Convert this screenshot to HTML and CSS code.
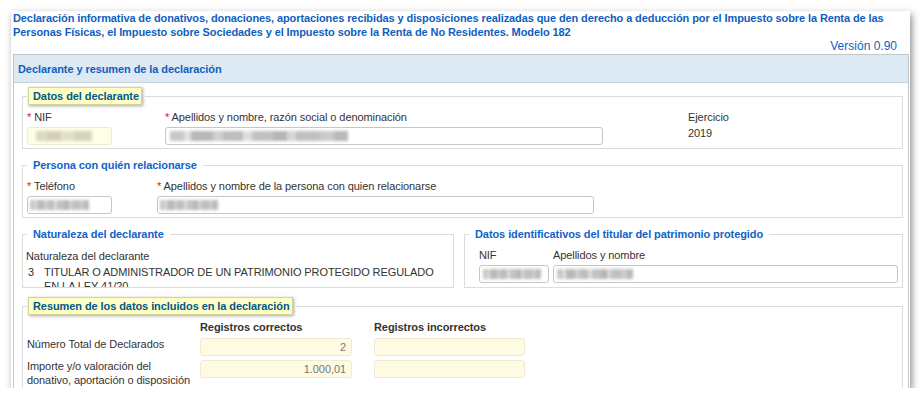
FILE: index.html
```html
<!DOCTYPE html>
<html lang="es">
<head>
<meta charset="utf-8">
<title>Modelo 182</title>
<link rel="stylesheet" href="styles.css">
</head>
<body>
<div class="window">
  <div class="title">Declaración informativa de donativos, donaciones, aportaciones recibidas y disposiciones realizadas que den derecho a deducción por el Impuesto sobre la Renta de las Personas Físicas, el Impuesto sobre Sociedades y el Impuesto sobre la Renta de No Residentes. Modelo 182</div>
  <div class="version">Versión 0.90</div>
  <div class="panel">
    <div class="panel-head">Declarante y resumen de la declaración</div>
    <div class="panel-body">

      <fieldset class="fs">
        <legend class="lg"><span class="hl">Datos del declarante</span></legend>
        <div class="row">
          <div class="col col-nif">
            <div class="lbl"><span class="req">*</span> NIF</div>
            <div class="inp inp-yellow"><span class="blur b1"></span></div>
          </div>
          <div class="col col-name1">
            <div class="lbl"><span class="req">*</span> Apellidos y nombre, razón social o denominación</div>
            <div class="inp"><span class="blur b2"></span></div>
          </div>
          <div class="col col-ej">
            <div class="lbl">Ejercicio</div>
            <div class="val">2019</div>
          </div>
        </div>
      </fieldset>

      <fieldset class="fs">
        <legend class="lg">Persona con quién relacionarse</legend>
        <div class="row">
          <div class="col col-nif">
            <div class="lbl"><span class="req">*</span> Teléfono</div>
            <div class="inp"><span class="blur b3"></span></div>
          </div>
          <div class="col col-name2">
            <div class="lbl"><span class="req">*</span> Apellidos y nombre de la persona con quien relacionarse</div>
            <div class="inp"><span class="blur b4"></span></div>
          </div>
        </div>
      </fieldset>

      <div class="pair">
        <fieldset class="fs fs-nat">
          <legend class="lg">Naturaleza del declarante</legend>
          <div class="nat">
            <div class="lbl">Naturaleza del declarante</div>
            <div class="nat-row">
              <span class="nat-num">3</span>
              <span class="nat-txt">TITULAR O ADMINISTRADOR DE UN PATRIMONIO PROTEGIDO REGULADO EN LA LEY 41/20</span>
            </div>
          </div>
        </fieldset>
        <fieldset class="fs fs-tit">
          <legend class="lg">Datos identificativos del titular del patrimonio protegido</legend>
          <div class="row">
            <div class="col col-nif3">
              <div class="lbl">NIF</div>
              <div class="inp"><span class="blur b5"></span></div>
            </div>
            <div class="col col-name3">
              <div class="lbl">Apellidos y nombre</div>
              <div class="inp"><span class="blur b6"></span></div>
            </div>
          </div>
        </fieldset>
      </div>

      <fieldset class="fs fs-res">
        <legend class="lg"><span class="hl">Resumen de los datos incluidos en la declaración</span></legend>
        <div class="grid">
          <div></div>
          <div class="th">Registros correctos</div>
          <div class="th">Registros incorrectos</div>
          <div class="glbl">Número Total de Declarados</div>
          <div class="inp inp-ro">2</div>
          <div class="inp inp-ro"></div>
          <div class="glbl">Importe y/o valoración del<br>donativo, aportación o disposición</div>
          <div class="inp inp-ro">1.000,01</div>
          <div class="inp inp-ro"></div>
        </div>
      </fieldset>

    </div>
  </div>
</div>
</body>
</html>
```

FILE: styles.css
```css
* { box-sizing: border-box; }

html, body {
  margin: 0;
  padding: 0;
  background: #ffffff;
}

body {
  font-family: "Liberation Sans", Arial, sans-serif;
  font-size: 11px;
  line-height: 14px;
  letter-spacing: -0.08px;
  color: #333333;
}

.window {
  margin: 11px 0 0 11px;
  width: 899px;
  height: 377px;
  background: #ffffff;
  overflow: hidden;
  padding: 0 1px 0 2px;
  box-shadow: 2px 3px 7px rgba(0, 0, 0, 0.45);
}

.title {
  color: #0f5fc0;
  font-weight: bold;
  line-height: 14px;
  letter-spacing: -0.1px;
  padding-right: 10px;
}

.version {
  color: #0f5fc0;
  text-align: right;
  padding-right: 12px;
  height: 15px;
  font-size: 12px;
  letter-spacing: 0;
}

.panel {
  border: 1px solid #c2c6ca;
  border-bottom: none;
}

.panel-head {
  background: #deeaf3;
  color: #0f5fc0;
  font-weight: bold;
  height: 28px;
  line-height: 28px;
  padding-left: 4px;
  border-bottom: 1px solid #c8d2da;
}

.panel-body {
  padding: 6px 5px 0 8px;
}

.fs {
  border: 1px solid #dcdcdc;
  margin: 0 0 9px 0;
  padding: 0 4px 3px 4px;
  min-width: 0;
}

.lg {
  color: #0f63c8;
  font-weight: bold;
  padding: 0 6px 0 6px;
  margin-left: 0;
  line-height: 14px;
}

.hl {
  position: relative;
  z-index: 0;
  color: #00588c;
}

.hl::before {
  content: "";
  position: absolute;
  left: -5px;
  right: -3px;
  top: -3px;
  bottom: -3px;
  background: #ffffc4;
  border: 1px solid #d4d3a0;
  box-shadow: 1px 1px 3px rgba(0, 0, 0, 0.35);
  z-index: -1;
}

.row {
  display: flex;
  align-items: flex-start;
  padding-top: 7px;
}

.col { display: flex; flex-direction: column; }

.lbl { height: 14px; white-space: nowrap; }

.req { color: #d2142a; }

.inp {
  height: 18px;
  margin-top: 3px;
  border: 1px solid #c6c6c6;
  border-radius: 3px;
  background: #ffffff;
  display: flex;
  align-items: center;
  overflow: hidden;
}

.inp-yellow {
  background: #fffde4;
  border-color: #ecebd6;
}

.col-nif { width: 85px; }
.col-name1 { width: 438px; margin-left: 53px; }
.col-ej { margin-left: 85px; }
.col-name2 { width: 437px; margin-left: 45px; }

.val { margin-top: 2px; line-height: 14px; }

.blur {
  display: inline-block;
  height: 10px;
  filter: blur(1.4px);
  background: linear-gradient(90deg, #c8c8c8 0 8%, #e2e2e2 8% 12%, #b8b8b8 12% 24%, #cfcfcf 24% 30%, #bdbdbd 30% 41%, #dedede 41% 46%, #c2c2c2 46% 58%, #b5b5b5 58% 66%, #d6d6d6 66% 71%, #c0c0c0 71% 84%, #cbcbcb 84% 92%, #b9b9b9 92% 100%);
}

.b1 { width: 56px; margin-left: 8px; background: linear-gradient(90deg, #dcdac4 0 20%, #d2d0ba 20% 45%, #e2e0ca 45% 70%, #d6d4be 70% 100%); }
.b2 { width: 178px; margin-left: 4px; }
.b3 { width: 59px; margin-left: 2px; }
.b4 { width: 58px; margin-left: 2px; }
.b5 { width: 58px; margin-left: 3px; }
.b6 { width: 76px; margin-left: 3px; }

.pair {
  display: flex;
  gap: 10px;
  margin-bottom: 11px;
}

.pair .fs { margin-bottom: 0; }

.fs-nat { width: 432px; flex: none; padding-bottom: 0; }
.fs-tit { flex: 1; padding-bottom: 3px; }

.nat {
  height: 46px;
  overflow: hidden;
  padding-top: 8px;
  margin-left: -1px;
}

.nat-row {
  display: flex;
  margin-top: 2px;
  line-height: 14px;
}

.nat-num { width: 18px; padding-left: 2px; flex: none; }
.nat-txt { flex: 1; padding-right: 4px; }

.col-nif3 { width: 70px; margin-left: 10px; }
.col-name3 { flex: 1; margin-left: 4px; }

.grid {
  display: grid;
  grid-template-columns: 151px 152px 151px;
  column-gap: 22px;
  row-gap: 4px;
  padding-top: 7px;
  align-items: start;
}

.th { font-weight: bold; }

.glbl { line-height: 14px; margin-top: -1px; white-space: nowrap; }

.inp-ro {
  margin-top: 0;
  background: #fffbe3;
  border-color: #ecebd8;
  justify-content: flex-end;
  padding-right: 5px;
  color: #777777;
}
```
